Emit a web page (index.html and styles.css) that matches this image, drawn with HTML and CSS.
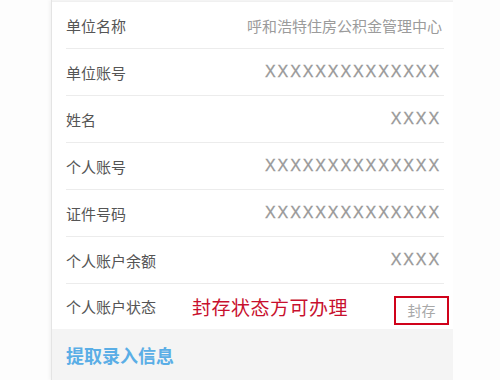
FILE: index.html
```html
<!DOCTYPE html>
<html lang="zh-CN">
<head>
    <meta charset="UTF-8">
    <meta name="viewport" content="width=device-width, initial-scale=1.0">
    <title>提取录入信息</title>
    <link rel="stylesheet" href="styles.css">
</head>
<body>
    <div class="page">
        <div class="info-card">
            <div class="info-row">
                <span class="info-label">单位名称</span>
                <span class="info-value">呼和浩特住房公积金管理中心</span>
            </div>
            <div class="info-row">
                <span class="info-label">单位账号</span>
                <span class="info-value masked">XXXXXXXXXXXXXX</span>
            </div>
            <div class="info-row">
                <span class="info-label">姓名</span>
                <span class="info-value masked">XXXX</span>
            </div>
            <div class="info-row">
                <span class="info-label">个人账号</span>
                <span class="info-value masked">XXXXXXXXXXXXXX</span>
            </div>
            <div class="info-row">
                <span class="info-label">证件号码</span>
                <span class="info-value masked">XXXXXXXXXXXXXX</span>
            </div>
            <div class="info-row">
                <span class="info-label">个人账户余额</span>
                <span class="info-value masked">XXXX</span>
            </div>
            <div class="info-row last">
                <span class="info-label">个人账户状态</span>
                <span class="note">封存状态方可办理</span>
                <span class="status-box">封存</span>
            </div>
        </div>
        <div class="section-title">提取录入信息</div>
    </div>
</body>
</html>
```

FILE: styles.css
```css
body {
    margin: 0;
    background: #fdfdfd;
    font-family: "Noto Sans CJK SC", "Noto Sans", sans-serif;
    height: 380px;
    overflow: hidden;
}

.page {
    margin-left: 51px;
    width: 401px;
    padding-top: 1px;
    border-left: 1px solid #e4e4e4;
    box-shadow: -2px 0 3px rgba(0, 0, 0, 0.04);
    background: #f4f4f4;
    height: 379px;
}

.info-card {
    background: #fff;
    border-top: 1px solid #f0f0f0;
}

.info-row {
    display: flex;
    align-items: center;
    height: 46px;
    margin: 0 9px 0 14px;
    border-bottom: 1px solid #ececec;
}

.info-row.last {
    height: 45px;
    border-bottom: none;
}

.info-label {
    font-size: 15px;
    color: #555;
}

.info-value {
    margin-left: auto;
    padding-right: 2px;
    font-size: 15px;
    color: #9b9b9b;
}

.info-value.masked {
    font-family: "Liberation Sans", Arial, sans-serif;
    font-size: 16px;
    letter-spacing: 1.9px;
    padding-right: 3px;
    color: #999;
    -webkit-text-stroke: 0.3px #999;
}

.note {
    margin-left: 36px;
    font-size: 19px;
    color: #c8102e;
    letter-spacing: 0.5px;
}

.status-box {
    margin: 7px -5px 0 auto;
    width: 51px;
    height: 25px;
    border: 2px solid #d0021b;
    display: flex;
    align-items: center;
    justify-content: center;
    font-size: 14px;
    color: #a8a8a8;
}

.section-title {
    padding: 13px 0 0 14px;
    font-size: 18px;
    font-weight: bold;
    color: #5aaee6;
}
```
